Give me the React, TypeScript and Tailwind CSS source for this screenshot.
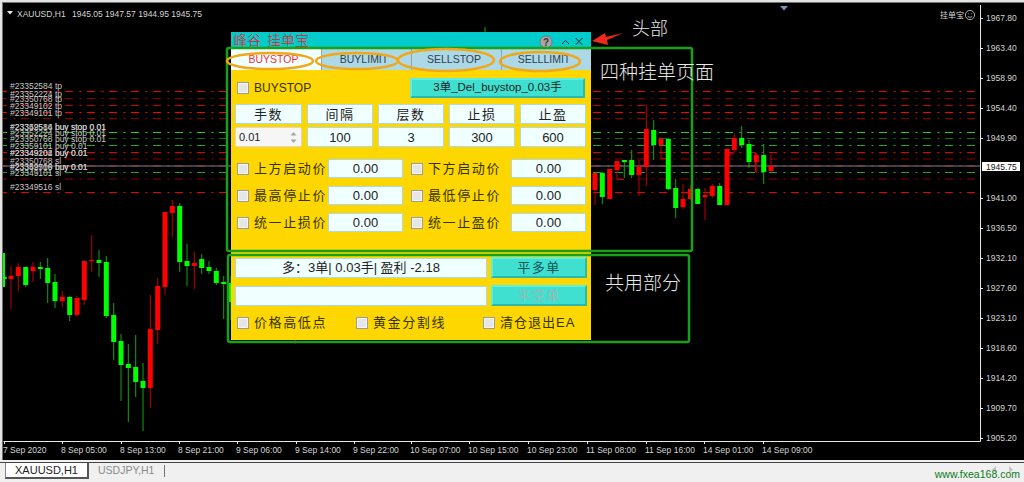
import { ReactNode } from 'react';

type Candle = [number, 'g' | 'r', number, number, number, number];

// x, colour, wick top, wick bottom, body top, body bottom
const candles: Candle[] = [
  [2.5, 'g', 253, 288, 253, 287],
  [4.2, 'g', 277, 279, 277, 279],
  [11, 'r', 266, 309, 276, 279],
  [18.3, 'r', 263, 291, 267, 276],
  [25.7, 'g', 267, 287, 267, 285],
  [33, 'r', 262, 282, 267, 271],
  [40.3, 'g', 262, 279, 267, 269],
  [47.7, 'g', 258, 303, 268, 283],
  [55, 'g', 274, 308, 282, 301],
  [62.3, 'r', 291, 307, 297, 301],
  [69.7, 'g', 296, 321, 297, 315],
  [77, 'r', 296, 317, 298, 315],
  [84.3, 'r', 261, 305, 261, 300],
  [91.7, 'r', 235, 272, 260, 261],
  [99, 'g', 250, 277, 260, 263],
  [106.3, 'g', 256, 318, 262, 316],
  [113.7, 'g', 303, 360, 315, 342],
  [121, 'g', 334, 401, 341, 365],
  [128.3, 'g', 344, 422, 364, 368],
  [135.7, 'g', 335, 397, 367, 382],
  [143, 'g', 363, 431, 381, 388],
  [150.3, 'r', 295, 408, 329, 388],
  [157.7, 'r', 278, 344, 286, 330],
  [165, 'r', 212, 295, 212, 287],
  [172.3, 'r', 200, 237, 206, 213],
  [179.7, 'g', 203, 272, 206, 262],
  [187, 'g', 244, 286, 261, 266],
  [194.3, 'r', 252, 289, 263, 266],
  [201.7, 'g', 254, 274, 259, 268],
  [209, 'g', 261, 274, 267, 271],
  [216.3, 'g', 268, 285, 271, 283],
  [223.7, 'g', 276, 319, 282, 284],
  [231, 'g', 276, 320, 283, 302],
  [485, 'g', 27, 40, 38, 40],
  [295, 'r', 338, 344, 338, 340],
  [595, 'r', 173, 205, 173, 190],
  [602.3, 'g', 172, 204, 173, 197],
  [609.7, 'r', 170, 198, 169, 199],
  [617, 'r', 161, 179, 161, 170],
  [624.3, 'g', 161, 178, 160, 162],
  [631.7, 'g', 150, 178, 160, 175],
  [639, 'r', 160, 196, 167, 175],
  [646.3, 'r', 105, 186, 129, 167],
  [653.7, 'g', 120, 160, 130, 145],
  [661, 'r', 137, 158, 139, 145],
  [668.3, 'g', 138, 190, 139, 189],
  [675.7, 'g', 179, 218, 188, 208],
  [683, 'r', 184, 209, 199, 207],
  [690.3, 'r', 185, 200, 189, 199],
  [697.7, 'g', 188, 204, 189, 204],
  [705, 'r', 188, 220, 195, 197],
  [712.3, 'r', 184, 198, 186, 196],
  [719.7, 'g', 183, 205, 186, 205],
  [727, 'r', 148, 205, 149, 205],
  [734.3, 'r', 134, 153, 138, 150],
  [741.7, 'g', 126, 148, 138, 145],
  [749, 'g', 140, 168, 144, 162],
  [756.3, 'r', 153, 173, 155, 162],
  [763.7, 'g', 144, 184, 155, 172],
  [771, 'r', 154, 172, 166, 171],
];

// order levels: y, colour
const levels: [number, string][] = [
  [91.5, '#ee0000'],
  [98.5, '#8b0000'],
  [105.5, '#c80000'],
  [112.5, '#ff0000'],
  [118.5, '#8b0000'],
  [132.5, '#22cc22'],
  [138.5, '#146e14'],
  [145.5, '#1fa81f'],
  [152.5, '#ee0000'],
  [159, '#8b0000'],
  [166, '#c80000'],
  [172.5, '#1fa81f'],
  [179, '#8b0000'],
  [192.5, '#ee0000'],
];

const orderLabels: [number, string][] = [
  [89, '#23352584 tp'],
  [97, '#23352224 tp'],
  [102, '#23350768 tp'],
  [109, '#23349102 tp'],
  [116, '#23349101 tp'],
  [130, '#23352584 buy stop 0.01'],
  [130, '#23349516 buy stop 0.01'],
  [136, '#23352224 buy stop 0.01'],
  [142, '#23350768 buy stop 0.01'],
  [149, '#23359101 buy 0.01'],
  [156, '#23349102 buy 0.01'],
  [156, '#23349204 buy 0.01'],
  [164, '#23350768 sl'],
  [170, '#23349516 buy 0.01'],
  [170, '#23352709 buy 0.01'],
  [176, '#23349101 sl'],
  [190, '#23349516 sl'],
];

const prices: [number, string][] = [
  [21, '1967.80'],
  [51, '1963.40'],
  [81, '1958.90'],
  [111, '1954.40'],
  [141, '1949.90'],
  [201, '1941.00'],
  [231, '1936.50'],
  [261, '1932.10'],
  [291, '1927.60'],
  [321, '1923.10'],
  [351, '1918.60'],
  [381, '1914.20'],
  [411, '1909.70'],
  [441, '1905.20'],
];

const times: [number, string][] = [
  [3, '7 Sep 2020'],
  [61, '8 Sep 05:00'],
  [120, '8 Sep 13:00'],
  [178, '8 Sep 21:00'],
  [236, '9 Sep 06:00'],
  [295, '9 Sep 14:00'],
  [353, '9 Sep 22:00'],
  [410, '10 Sep 07:00'],
  [468, '10 Sep 15:00'],
  [527, '10 Sep 23:00'],
  [586, '11 Sep 08:00'],
  [645, '11 Sep 16:00'],
  [703, '14 Sep 01:00'],
  [762, '14 Sep 09:00'],
];

function Chart() {
  return (
    <svg width={1024} height={460} className="absolute left-0 top-0" fontFamily="'Liberation Sans', sans-serif" fontSize={8.5} fill="#d4d4d4">
      <clipPath id="plot">
        <rect x={3} y={3} width={978} height={438} />
      </clipPath>
      <g clipPath="url(#plot)">
        {levels.map(([y, color]) => (
          <line key={y} x1={-1} x2={975} y1={y} y2={y} stroke={color} strokeWidth={1} strokeDasharray="8 6.5 2 5.5" />
        ))}
        <line x1={3} x2={980} y1={166} y2={166} stroke="#77808c" strokeWidth={1} />
        <polyline points="617,179.5 624,179.5" fill="none" stroke="#d00000" />
        <polyline points="661,158.5 668,158.5" fill="none" stroke="#d00000" />
        <polyline points="734,153.5 727,155" fill="none" stroke="#d00000" />
        <polyline points="748,152.5 755.5,152.5 755.5,172" fill="none" stroke="#d00000" />
        {candles.map(([x, tone, wickTop, wickBottom, bodyTop, bodyBottom]) => {
          const color = tone === 'g' ? '#00ff00' : '#ff0000';
          const wick = tone === 'g' ? '#0da80d' : '#c00000';
          return (
            <g key={`${x}-${bodyTop}`}>
              <rect x={x - 0.5} y={wickTop} width={1} height={wickBottom - wickTop} fill={wick} />
              <rect x={x - 2.5} y={bodyTop} width={5} height={bodyBottom - bodyTop} fill={color} />
            </g>
          );
        })}
      </g>
      <path d="M3.5 441.5H980.5V5" fill="none" stroke="#e8e8e8" />
      {prices.map(([y, label]) => (
        <g key={label}>
          <rect x={980} y={y - 3} width={3} height={1} fill="#e8e8e8" />
          <text x={986} y={y}>{label}</text>
        </g>
      ))}
      {times.map(([x, label]) => (
        <g key={label}>
          <rect x={x + 1} y={441} width={1} height={3} fill="#e8e8e8" />
          <text x={x} y={453}>{label}</text>
        </g>
      ))}
      <rect x={982} y={162} width={38} height={9} fill="#ffffff" />
      <text x={986} y={170} fill="#111111">1945.75</text>

      <path d="M7 11h6l-3 3.500z" fill="#e8e8e8" />
      <text x={17} y={16.5}>XAUUSD,H1</text>
      <text x={72} y={16.5}>1945.05 1947.57 1944.95 1945.75</text>
      {orderLabels.map(([y, label]) => (
        <text key={label} x={10} y={y} fill="#c8c8c8">{label}</text>
      ))}
      <path d="M780 6h8l-4 4.500z" fill="#8495a8" />
      <text x={940} y={18} fontFamily="'Noto Sans CJK SC', sans-serif" fontSize={8}>挂单宝</text>
      <g fill="none" stroke="#d4d4d4" strokeWidth={0.8}>
        <circle cx={970} cy={15} r={4.6} />
        <path d="M967.8 16.500q2.200 1.800 4.400 0" />
        <path d="M968.3 13.400v.8M971.7 13.400v.8" />
      </g>
    </svg>
  );
}

function Checkbox({ className = '' }: { className?: string }) {
  return <span className={`block w-[12px] h-[12px] shrink-0 border border-[#9c9c9c] bg-[#e6e6e6] shadow-[inset_0_0_0_1px_#f4f4f4] ${className}`} />;
}

function Field({ children, className = '' }: { children?: ReactNode; className?: string }) {
  return (
    <div className={`flex items-center justify-center bg-[#f0ffff] border border-[#add8e6] rounded-[1px] text-[#222] text-[13px] leading-none font-['Liberation_Sans','Noto_Sans_CJK_SC',sans-serif] ${className}`}>
      {children}
    </div>
  );
}

function BevelButton({ children, className = '' }: { children: ReactNode; className?: string }) {
  return (
    <div className={`flex items-center justify-center bg-[#40e0d0] border-2 border-t-[#5cf0e2] border-l-[#5cf0e2] border-r-[#2cb8aa] border-b-[#2cb8aa] leading-none ${className}`}>
      {children}
    </div>
  );
}

function PriceOption({ label, className = '' }: { label: string; className?: string }) {
  return (
    <div className={`flex items-center ${className}`}>
      <Checkbox className="ml-[2px]" />
      <span className="ml-[5px] text-[13px] tracking-[1.6px] text-[#333300] leading-none whitespace-nowrap">{label}</span>
      <Field className="ml-auto w-[75px] h-[19px]">0.00</Field>
    </div>
  );
}

function TogglePanel() {
  const tabs = ['BUYSTOP', 'BUYLIMIT', 'SELLSTOP', 'SELLLIMIT'];
  const heads = ['手数', '间隔', '层数', '止损', '止盈'];
  const values = ['100', '3', '300', '600'];

  return (
    <div className="absolute left-[231px] top-[32px] w-[360px] h-[308px] flex flex-col font-['Liberation_Sans','Noto_Sans_CJK_SC',sans-serif]">
      <div className="h-[16px] flex items-center bg-[#00cccc] px-[2px]">
        <span className="-mt-[2px] text-[14px] leading-none text-[#f01020] font-['Noto_Sans_CJK_SC',sans-serif] font-light whitespace-nowrap">峰谷<span className="ml-[6px]">挂单宝</span></span>
        <svg width={46} height={14} className="ml-auto mr-[5px] mt-[4px]" viewBox="0 0 46 14">
          <circle cx={8} cy={7} r={6} fill="#a8a8a8" stroke="#777" />
          <text x={8} y={10.5} textAnchor="middle" fontSize={10} fontWeight={700} fill="#333" fontFamily="'Liberation Sans', sans-serif">?</text>
          <path d="M24 9l3.500-3.500 3.500 3.500" fill="none" stroke="#222" />
          <path d="M38.500 4l7 7M45.500 4l-7 7" fill="none" stroke="#222" transform="translate(-1 -1)" />
        </svg>
      </div>
      <div className="h-[22px] grid grid-cols-4 bg-[#add8e6]">
        {tabs.map((tab, i) => (
          <div
            key={tab}
            className={`flex items-center justify-center pr-[5px] text-[10.5px] border-t border-[#9cc] ${
              i === 0 ? 'bg-[#f0ffff] text-[#f03040]' : 'border-l border-l-[#8aa6b0] text-[#2f3f4f]'
            }`}
          >
            {tab}
          </div>
        ))}
      </div>
      <div className="flex-1 bg-[#ffd700] px-[4px] pt-[8px]">
        <div className="h-[19px] flex items-center">
          <Checkbox className="ml-[2px]" />
          <span className="ml-[5px] text-[12px] text-[#333300] leading-none">BUYSTOP</span>
          <BevelButton className="ml-auto mr-[2px] w-[175px] h-[20px] text-[#222] text-[11.5px]">3单_Del_buystop_0.03手</BevelButton>
        </div>
        <div className="mt-[7px] grid grid-cols-[67px_66px_66px_66px_66px] gap-x-[5px] gap-y-[3px]">
          {heads.map((head) => (
            <Field key={head} className="h-[20px] tracking-[1.5px]">{head}</Field>
          ))}
          <div className="h-[20px] flex items-center justify-between bg-[#f6f6f6] border border-[#d8d8d8] rounded-[2px] pl-[3px] pr-[4px] text-[11px] text-[#222]">
            0.01
            <svg width={7} height={13} viewBox="0 0 7 13" fill="#a8a8a8">
              <path d="M3.500 1l3 3.500h-6zM3.500 12l3-3.500h-6z" />
            </svg>
          </div>
          {values.map((value) => (
            <Field key={value} className="h-[20px]">{value}</Field>
          ))}
        </div>
        <div className="mt-[12px] flex flex-col gap-[8px]">
          <div className="grid grid-cols-[168px_177px] gap-x-[6px]">
            <PriceOption label="上方启动价" />
            <PriceOption label="下方启动价" />
          </div>
          <div className="grid grid-cols-[168px_177px] gap-x-[6px]">
            <PriceOption label="最高停止价" />
            <PriceOption label="最低停止价" />
          </div>
          <div className="grid grid-cols-[168px_177px] gap-x-[6px]">
            <PriceOption label="统一止损价" />
            <PriceOption label="统一止盈价" />
          </div>
        </div>
        <div className="mt-[25px] flex items-center gap-[4px]">
          <Field className="w-[252px] h-[20px] text-[12.5px]">多：3单| 0.03手| 盈利 -2.18</Field>
          <BevelButton className="w-[96px] h-[21px] text-[13px] text-[#115555] tracking-[1.5px]">平多单</BevelButton>
        </div>
        <div className="mt-[7px] flex items-center gap-[4px]">
          <Field className="w-[252px] h-[20px]" />
          <BevelButton className="w-[96px] h-[21px] text-[13px] text-[#9cb8b0] tracking-[1.5px]">平空单</BevelButton>
        </div>
        <div className="mt-[10px] flex items-center text-[13px] tracking-[1.6px] text-[#333300] leading-none">
          <Checkbox className="ml-[2px]" />
          <span className="ml-[5px] w-[102px]">价格高低点</span>
          <Checkbox />
          <span className="ml-[5px] w-[110px]">黄金分割线</span>
          <Checkbox />
          <span className="ml-[5px] tracking-[1px]">清仓退出EA</span>
        </div>
      </div>
    </div>
  );
}

function Callouts() {
  return (
    <>
      <svg width={1024} height={460} className="absolute left-0 top-0 pointer-events-none">
        <g fill="none" stroke="#18a018" strokeWidth={2.5}>
          <rect x={227} y={48} width={465} height={203} rx={2} />
          <rect x={228} y={255} width={461} height={87} rx={2} />
        </g>
        <g fill="none" stroke="#f0a818" strokeWidth={2.5}>
          <ellipse cx={270} cy={61} rx={43} ry={8} />
          <ellipse cx={357} cy={61} rx={41} ry={8} />
          <ellipse cx={446} cy={60} rx={48} ry={11} />
          <ellipse cx={540} cy={61.5} rx={40} ry={9.5} />
        </g>
        <path d="M592 41l13-8 1 4 17-4-16 7 1 5z" fill="#f02a1a" />
      </svg>
      <div className="absolute left-[632px] top-[18px] text-[18px] leading-none text-[#e8e8e8] font-['Noto_Sans_CJK_SC',serif] font-light whitespace-nowrap">头部</div>
      <div className="absolute left-[600px] top-[61px] text-[19px] leading-none text-[#e8e8e8] font-['Noto_Sans_CJK_SC',serif] font-light whitespace-nowrap">四种挂单页面</div>
      <div className="absolute left-[605px] top-[272px] text-[19px] leading-none text-[#e8e8e8] font-['Noto_Sans_CJK_SC',serif] font-light whitespace-nowrap">共用部分</div>
    </>
  );
}

export default function App() {
  return (
    <div className="w-[1024px] h-[482px] overflow-hidden flex flex-col bg-[#f0f0f0] font-['Liberation_Sans',sans-serif]">
      <div className="relative h-[460px] shrink-0 bg-black shadow-[inset_2px_2px_0_0_#e4e4e4,inset_3px_3px_0_0_#707070]">
        <Chart />
        <TogglePanel />
        <Callouts />
      </div>
      <div className="relative mt-[2px] flex-1 flex items-start border-t border-[#444]">
        <div className="ml-[5px] h-[16px] w-[84px] flex items-center justify-center bg-white border-l border-l-[#888] border-r-2 border-b-2 border-[#555] text-[11px] text-[#222]">XAUUSD,H1</div>
        <div className="ml-[9px] h-[16px] flex items-center text-[10.5px] text-[#8a8a8a]">USDJPY,H1</div>
        <div className="ml-[10px] mt-[2px] h-[12px] w-px bg-[#777]" />
        <svg width={22} height={8} viewBox="0 0 22 8" fill="#c4c4c4" className="absolute left-[992px] top-[3px]">
          <path d="M4 0v7l-4-3.500zM17 0l4 3.500-4 3.500z" />
        </svg>
        <div className="relative ml-auto mr-[4px] mt-[6px] text-[10.5px] leading-none text-[#0a7a20]">www.fxea168.com</div>
      </div>
    </div>
  );
}
